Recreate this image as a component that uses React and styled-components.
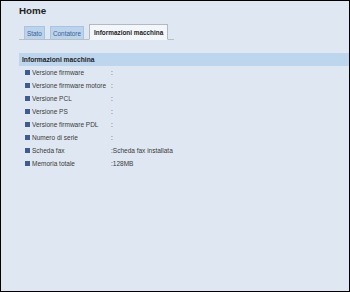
import React from "react";
import styled, { createGlobalStyle } from "styled-components";

const GlobalStyle = createGlobalStyle`
  body {
    margin: 0;
    font-family: "Liberation Sans", Arial, sans-serif;
  }
`;

const Frame = styled.div`
  width: 350px;
  height: 292px;
  box-sizing: border-box;
  border: 1px solid #000;
  background: #dfe8f2;
  padding: 3px 0 0 18px;
  display: flex;
  flex-direction: column;
`;

const Title = styled.div`
  font-size: 9.8px;
  font-weight: bold;
  color: #1f1f1f;
  line-height: 13px;
`;

const TabStrip = styled.div`
  display: flex;
  align-items: flex-end;
  gap: 5px;
  width: 155px;
  height: 16px;
  margin-top: 7px;
  padding-left: 5px;
  box-sizing: border-box;
  border-bottom: 1px solid #b9bfc7;
`;

const Tab = styled.div`
  height: ${(p) => (p.$active ? "16px" : "14px")};
  box-sizing: border-box;
  margin-bottom: -1px;
  padding: 0 ${(p) => (p.$active ? "4px" : "2px")};
  display: flex;
  align-items: center;
  font-size: 6.4px;
  font-weight: ${(p) => (p.$active ? "bold" : "normal")};
  color: ${(p) => (p.$active ? "#222" : "#3a5f96")};
  background: ${(p) => (p.$active ? "#f3f6fa" : "#bcd3ec")};
  border: 1px solid ${(p) => (p.$active ? "#b4b9bf" : "#a9c4e2")};
  border-bottom-color: ${(p) => (p.$active ? "#f3f6fa" : "#b9bfc7")};
`;

const SectionBar = styled.div`
  margin-top: 13px;
  height: 13px;
  display: flex;
  align-items: center;
  padding-left: 3px;
  background: #bdd6ed;
  font-size: 6.7px;
  font-weight: bold;
  color: #1f1f1f;
`;

const InfoList = styled.div`
  display: flex;
  flex-direction: column;
`;

const InfoRow = styled.div`
  display: flex;
  align-items: center;
  height: 13px;
  padding-left: 6px;
  font-size: 6.5px;
  color: #3a3a3a;
`;

const Bullet = styled.span`
  width: 5px;
  height: 5px;
  background: #3f5c8c;
  margin-right: 2px;
  flex: none;
`;

const Label = styled.span`
  width: 79px;
  flex: none;
`;

const Value = styled.span`
  white-space: nowrap;
`;

const rows = [
  ["Versione firmware", ""],
  ["Versione firmware motore", ""],
  ["Versione PCL", ""],
  ["Versione PS", ""],
  ["Versione firmware PDL", ""],
  ["Numero di serie", ""],
  ["Scheda fax", "Scheda fax installata"],
  ["Memoria totale", "128MB"],
];

function App() {
  return (
    <>
      <GlobalStyle />
      <Frame>
        <Title>Home</Title>
        <TabStrip>
          <Tab>Stato</Tab>
          <Tab>Contatore</Tab>
          <Tab $active>Informazioni macchina</Tab>
        </TabStrip>
        <SectionBar>Informazioni macchina</SectionBar>
        <InfoList>
          {rows.map(([label, value]) => (
            <InfoRow key={label}>
              <Bullet />
              <Label>{label}</Label>
              <Value>:{value}</Value>
            </InfoRow>
          ))}
        </InfoList>
      </Frame>
    </>
  );
}

export default App;
